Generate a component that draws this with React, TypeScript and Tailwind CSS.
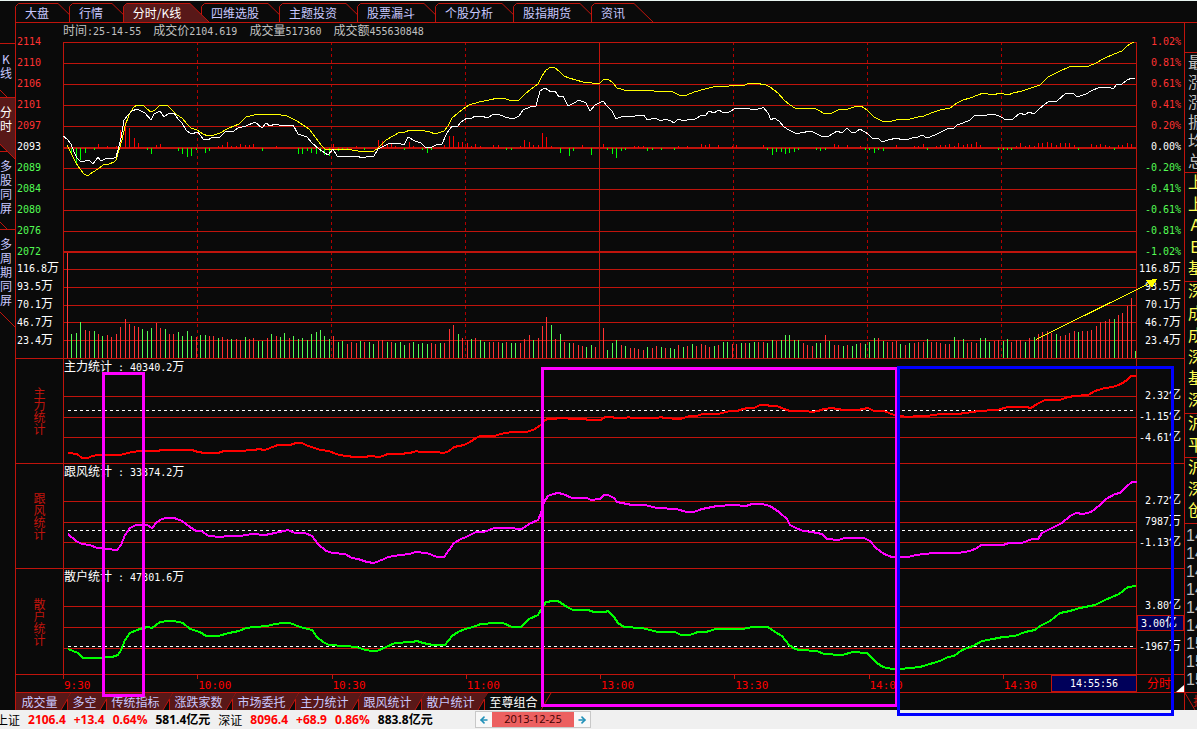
import { Fragment, ReactNode } from "react";
import { ArrowLeft, ArrowRight } from "lucide-react";

const RED = "#c0140c";

const topTabs = [
  { name: "大盘", w: 54 },
  { name: "行情", w: 54 },
  { name: "分时/K线", w: 78 },
  { name: "四维选股", w: 78 },
  { name: "主题投资", w: 78 },
  { name: "股票漏斗", w: 78 },
  { name: "个股分析", w: 78 },
  { name: "股指期货", w: 78 },
  { name: "资讯", w: 54 },
];

const bottomTabs = [
  { name: "成交量", w: 51 },
  { name: "多空", w: 39 },
  { name: "传统指标", w: 63 },
  { name: "涨跌家数", w: 63 },
  { name: "市场委托", w: 63 },
  { name: "主力统计", w: 63 },
  { name: "跟风统计", w: 63 },
  { name: "散户统计", w: 63 },
  { name: "至尊组合", w: 63 },
];

const prices = ["2114", "2110", "2106", "2101", "2097", "2093", "2089", "2084", "2080", "2076", "2072"];
const percents = ["1.02%", "0.81%", "0.61%", "0.41%", "0.20%", "0.00%", "-0.20%", "-0.41%", "-0.61%", "-0.81%", "-1.02%"];
const volumes = ["116.8万", "93.5万", "70.1万", "46.7万", "23.4万"];
const times = ["9:30", "10:00", "10:30", "11:00", "13:00", "13:30", "14:00", "14:30"];

const avgLine =
  "67,145 71,153 76,163 80,169 84,174 86,175 89,175 93,172 98,169 103,165 109,164 114,162 116,160 119,150 122,140 125,126 129,115 133,108 137,105 143,105 147,109 151,112 155,110 159,106 161,105 167,105 171,109 177,115 182,118 187,124 191,128 197,130 203,134 208,136 214,135 220,133 229,128 239,124 246,117 254,115 266,114 275,114 287,116 297,121 309,129 316,138 321,145 326,150 332,149 346,149 358,151 372,152 377,149 386,140 393,136 400,132 405,132 410,130 420,130 430,132 435,134 444,131 448,126 452,118 458,113 463,109 469,105 479,102 489,100 498,98 506,99 512,101 519,100 524,95 531,89 538,84 542,76 546,70 551,67 554,67 560,72 564,76 569,78 576,80 583,82 592,83 600,83 604,79 608,79 613,83 617,88 628,91 638,90 649,90 659,92 671,91 679,95 687,95 694,92 705,89 717,86 729,86 738,85 745,85 749,83 755,83 766,85 770,87 778,93 784,100 790,105 795,108 800,108 814,108 818,110 825,114 832,113 838,110 848,109 857,106 861,106 867,110 874,117 880,120 884,122 892,121 900,119 910,119 918,117 924,116 931,113 940,110 950,108 957,103 963,100 970,98 978,95 983,93 993,95 1000,93 1008,95 1013,93 1022,91 1031,88 1040,85 1048,77 1058,72 1069,67 1080,66 1089,66 1096,63 1105,58 1114,54 1122,51 1127,46 1135,41";

const priceLine =
  "63,136 67,139 71,144 74,152 77,158 81,162 89,160 93,164 98,157 101,161 105,159 114,158 116,157 118,150 121,138 124,120 128,115 132,111 137,109 145,113 151,120 154,114 160,111 164,117 169,113 174,113 178,119 182,123 186,130 191,134 198,132 203,139 208,140 213,137 220,137 226,131 234,131 238,128 246,126 255,122 262,128 266,123 270,126 275,124 283,126 293,125 298,134 307,137 312,143 319,149 328,155 333,149 337,156 355,156 364,158 368,156 374,156 378,149 384,146 390,143 398,143 404,145 408,137 415,141 421,143 426,148 432,147 436,145 442,144 447,133 452,126 457,127 461,122 467,118 471,119 475,116 481,116 488,118 492,115 498,114 505,117 513,119 519,116 523,110 530,107 536,106 540,91 543,89 545,88 551,92 555,91 559,97 563,96 568,106 574,103 579,100 586,103 590,111 595,105 603,101 607,106 612,111 616,119 623,116 632,117 638,115 644,115 647,120 655,118 661,121 665,119 671,121 674,123 678,119 684,121 690,119 695,119 702,115 706,115 709,111 714,113 719,110 722,112 729,112 736,108 741,109 746,108 754,110 762,108 763,107 768,113 771,120 774,118 779,121 784,127 789,130 795,133 800,133 811,131 821,136 829,136 837,131 842,133 847,128 852,133 856,132 860,129 868,134 873,139 878,138 882,142 888,140 897,138 902,140 909,139 915,137 918,137 922,135 927,138 935,135 949,128 953,129 957,125 963,123 970,120 975,115 987,115 994,114 1001,117 1006,120 1013,119 1020,113 1025,115 1029,112 1034,114 1039,109 1045,104 1048,102 1057,101 1065,94 1069,93 1073,93 1077,97 1086,94 1091,91 1100,87 1109,87 1113,89 1117,84 1122,84 1127,80 1132,78 1135,79";

const mainLine =
  "68,453 77,454 82,458 88,458 92,456 98,455 120,455 132,452 140,451 158,451 161,450 192,450 198,452 205,453 218,453 224,451 238,451 255,450 258,449 265,450 275,446 278,445 290,445 296,443 302,443 308,446 315,448 320,450 329,451 336,454 345,456 356,457 366,457 369,456 380,457 388,454 400,454 409,453 414,452 416,451 420,452 436,452 444,453 449,451 454,447 464,445 470,442 476,438 480,436 495,436 500,434 512,432 526,432 533,430 538,427 542,424 545,420 548,419 555,419 558,418 566,418 570,419 585,419 588,420 601,420 605,417 612,417 615,418 626,418 628,417 632,418 657,418 661,417 664,418 680,419 690,416 697,416 702,414 718,414 726,412 730,411 737,411 743,409 748,408 754,408 760,405 767,405 770,406 777,406 784,409 790,411 806,411 812,412 818,411 824,409 833,408 836,409 845,410 858,410 868,408 874,411 884,411 894,415 900,416 908,417 918,416 927,416 933,415 941,414 958,414 965,413 973,412 978,411 997,410 1008,407 1026,407 1031,408 1037,404 1045,400 1060,400 1068,397 1075,396 1088,395 1095,391 1105,388 1113,387 1121,384 1127,380 1131,376 1136,376";

const followLine =
  "68,534 76,541 82,544 90,545 97,548 107,549 117,550 121,545 125,535 130,528 136,525 147,525 152,528 157,522 162,519 166,518 174,518 182,521 190,527 196,531 201,531 209,536 220,537 229,536 240,536 252,534 265,535 275,533 288,530 295,533 305,533 312,536 318,544 326,551 333,553 345,554 352,558 358,559 367,562 374,563 384,559 388,557 400,555 410,554 415,552 427,553 437,557 444,557 449,550 454,543 461,539 466,537 476,532 484,532 494,528 508,528 522,529 529,524 538,520 541,513 544,502 548,496 553,494 558,493 563,494 572,498 587,498 591,500 600,499 604,495 608,495 614,498 617,502 632,505 645,505 657,508 676,509 687,512 694,512 702,509 717,506 733,505 746,506 752,504 762,504 770,506 779,512 787,519 790,525 796,528 803,531 812,532 822,534 827,539 838,540 845,538 864,538 870,541 876,548 884,554 892,557 908,557 916,555 934,553 958,553 970,551 977,548 981,545 1003,545 1009,543 1022,543 1032,539 1038,539 1042,533 1052,528 1062,523 1070,516 1076,513 1083,514 1091,512 1100,505 1106,499 1115,494 1120,493 1127,486 1132,482 1137,482";

const retailLine =
  "68,649 78,653 83,658 103,658 106,657 112,657 118,655 121,650 125,640 130,633 137,630 143,628 148,627 152,628 160,622 168,621 174,621 183,623 190,629 200,632 206,636 218,636 229,633 239,631 246,628 255,627 267,626 275,624 283,623 290,623 300,627 312,630 317,637 323,642 329,645 345,646 357,647 362,649 371,651 377,651 386,647 395,643 412,642 417,641 423,643 433,645 445,645 452,636 458,632 465,629 473,627 481,624 495,623 503,623 512,627 521,627 529,619 538,615 542,608 546,602 553,601 558,601 567,607 573,610 588,610 594,612 605,612 608,611 614,617 618,623 624,627 642,628 650,630 658,632 675,632 681,635 690,635 698,632 706,632 716,629 743,629 752,627 768,627 775,632 782,636 789,645 795,649 800,650 817,651 824,654 842,655 853,652 867,653 872,658 877,663 883,667 892,669 900,669 920,667 930,664 940,661 948,657 954,656 962,650 973,646 982,641 993,639 1003,637 1015,636 1025,632 1035,630 1040,626 1050,621 1060,613 1070,611 1080,608 1095,605 1105,600 1119,594 1128,587 1136,586";

// one entry per minute pair: colour letter + bar height
const morningVol =
  "r105 g24 g25 g36 r28 r27 g27 r24 g22 r23 r21 r24 r31 r39 r34 r32 r31 g29 g27 g30 r35 r30 g29 r24 r24 g26 g22 g27 g22 r21 g23 g23 r22 r22 g20 r21 r19 g19 r19 r18 g21 r19 r20 g17 g17 r20 g24 r22 g21 g25 r20 g22 g19 g20 g18 g24 g26 g28 g22 g19 r22 g16 g17 r14 r16 r15 g17 r16 g16 g14 r17 r18 g16 r16 g15 g16 g13 r15 g16 g14 g15 g14 r15 r14 g15 r15 r29 r33 g24 r20 r18 g19 r20 g18 g16 r16 r16 r16 g15 r16 g15 g15 r15 r19 r23 g18 r20 r32 r41 g33 r19 g24 r16 g15 r15 r13 r12 g11 g13 r11";
const afternoonVol =
  "r30 g8 g15 g18 r13 g12 r10 r10 r9 r8 g11 r10 r12 g11 r10 g10 g9 r13 g11 r12 g14 r12 r14 r13 r11 g12 r13 g16 g16 r14 r14 g15 r15 g15 g16 r16 r16 g15 g18 r17 g18 g23 g23 g18 g18 r15 r13 r12 g15 g15 r23 g17 r13 r13 g12 r13 g12 g14 r15 g14 g16 g20 r20 g17 r16 r16 r17 g14 r13 g15 r15 r16 r16 g19 r16 r16 r15 r14 r14 g21 r18 g19 r15 r16 r15 g20 g20 g16 r17 r18 g17 g19 r16 r18 r18 g16 r20 g21 r24 r26 r27 r25 g24 r22 r23 r25 r27 g26 r27 r27 r28 r32 r36 r37 r39 g39 r43 r45 r52 r60";

// [bar index, height], negative goes below the zero line
const morningFlow = [
  [1, -6], [2, -15], [3, -11], [4, -4], [6, -1], [7, 3], [9, 1], [11, 1], [12, 17], [13, 25], [14, 19], [15, 9], [16, 4],
  [18, -1], [19, -5], [20, 2], [21, 3], [25, -2], [26, -5], [27, -8], [28, -7], [29, -1], [31, -4], [32, -2], [34, 1],
  [35, 2], [36, 5], [37, 1], [38, 1], [39, 3], [40, 2], [41, 2], [42, 3], [44, -2], [47, 1], [52, -5], [53, -5], [54, -2],
  [55, -4], [56, -5], [57, -3], [58, -6], [59, -7], [60, 3], [61, -2], [62, -1], [63, -1], [65, 1], [67, -1], [70, 7],
  [71, 6], [72, 2], [73, 3], [74, 1], [76, -1], [77, 5], [78, 1], [80, -1], [81, -4], [82, -1], [85, 2], [86, 11], [87, 11],
  [88, 5], [89, 5], [90, 4], [91, 1], [92, 3], [93, 1], [96, 2], [97, 2], [99, -1], [100, -1], [102, 1], [103, 7],
  [104, 5], [105, 2], [106, 2], [107, 14], [108, 10], [109, 1], [111, -4], [113, -7], [114, -2], [116, 2], [118, -6],
];
const afternoonFlow = [
  [0, 3], [1, -1], [2, -5], [3, -9], [4, -2], [5, -1], [7, 1], [8, 1], [9, 1], [10, -2], [11, -1], [13, -1], [16, -1],
  [17, 1], [19, 1], [22, 3], [23, 2], [24, 3], [26, 2], [29, 1], [30, 2], [36, 2], [37, -1], [38, -6], [39, -3], [40, -3],
  [41, -5], [42, -4], [43, -3], [44, -1], [48, -1], [49, -2], [50, -1], [52, 3], [53, 2], [55, 2], [58, 1], [59, -1],
  [60, -1], [61, -4], [62, -1], [63, -2], [66, 2], [70, 1], [71, 1], [72, 3], [73, -1], [75, 1], [76, 2], [77, 2], [78, 3],
  [79, 1], [80, 4], [81, 2], [82, 3], [83, 3], [84, 5], [85, 2], [89, -1], [90, -1], [91, -1], [92, -1], [93, 1], [94, 4],
  [95, 1], [96, 2], [97, 1], [98, 4], [99, 4], [100, 5], [101, 4], [102, 2], [103, 4], [104, 4], [105, 4], [106, 2],
  [107, -1], [110, 3], [111, 2], [112, 3], [113, 2], [114, 1], [115, -1], [116, 2], [117, 2], [118, 4], [119, 3],
];

const barX = (start: number, i: number) => Math.floor(start + i * 4.44);

// digits in the mono face, Chinese characters a size larger
const Mix = ({ children }: { children: string }) => (
  <>
    {children.split(/([\u4e00-\u9fff]+)/).map((part, i) =>
      /[\u4e00-\u9fff]/.test(part) ? (
        <Fragment key={i}>{part}</Fragment>
      ) : (
        <span key={i} className="whitespace-pre font-['DejaVu_Sans_Mono',monospace] text-[10px]">{part}</span>
      )
    )}
  </>
);

const Plot = ({ y, h, children }: { y: number; h: number; children: ReactNode }) => (
  <svg
    className="absolute inset-0 h-full w-full"
    viewBox={`63 ${y} 1074 ${h}`}
    preserveAspectRatio="none"
    shapeRendering="crispEdges"
    fill="none"
  >
    {children}
  </svg>
);

const Curve = ({ points, color, w = 1 }: { points: string; color: string; w?: number }) => (
  <polyline points={points} stroke={color} strokeWidth={w} vectorEffect="non-scaling-stroke" />
);

const VolumeBars = ({ data, start }: { data: string; start: number }) => (
  <>
    {data.split(" ").map((bar, i) => {
      const h = Number(bar.slice(1));
      return (
        <rect key={i} x={barX(start, i)} y={358 - h} width="1" height={h} fill={bar[0] === "r" ? "#ff3232" : "#54fc54"} />
      );
    })}
  </>
);

const FlowBars = ({ data, start }: { data: number[][]; start: number }) => (
  <>
    {data.map(([i, h]) => (
      <rect
        key={i}
        x={barX(start, i)}
        y={h > 0 ? 147 - h : 148}
        width="1"
        height={Math.abs(h) + 1}
        fill={h > 0 ? "#ff0000" : "#00ff00"}
      />
    ))}
  </>
);

const PriceChart = () => (
  <Plot y={42} h={316}>
    {[197, 331, 465, 733, 867, 1001].map((x) => (
      <path key={x} d={`M${x}.5 42V358`} stroke="#b40000" strokeDasharray="3 3" />
    ))}
    <path d="M599.5 42V358" stroke={RED} />
    {[42, 63, 84, 105, 126, 168, 189, 210, 231, 269, 287, 305, 322, 340].map((y) => (
      <path key={y} d={`M63 ${y}.5H1137`} stroke={RED} />
    ))}
    <path d="M63 148H1137M63 252H1137" stroke={RED} strokeWidth="2" />
    <path d="M63.5 42V358M1136.5 42V358" stroke={RED} />
    <FlowBars data={morningFlow} start={67.4} />
    <FlowBars data={afternoonFlow} start={603.4} />
    <VolumeBars data={morningVol} start={67.4} />
    <VolumeBars data={afternoonVol} start={603.4} />
    <rect x="1135" y="351" width="1" height="7" fill="#54fc54" />
    <Curve points={avgLine} color="#ffff00" />
    <Curve points={priceLine} color="#ffffff" />
  </Plot>
);

type PanelProps = {
  name: string;
  value: string;
  y: number;
  lines: number[];
  zero: number;
  points: string;
  color: string;
  labels: string[];
  cls: string;
  current?: boolean;
};

const Panel = ({ name, value, y, lines, zero, points, color, labels, cls, current }: PanelProps) => (
  <section className={`flex border-b border-[#c0140c] ${cls}`}>
    <div className="flex w-[47px] shrink-0 items-center justify-center">
      <h2 className="w-3 text-center leading-3 break-all text-[#c0140c]">{name}</h2>
    </div>
    <div className="relative flex-1">
      <Plot y={y} h={current ? 105 : 104}>
        {lines.map((l) => (
          <path key={l} d={`M63 ${l}.5H1137`} stroke={RED} />
        ))}
        <path d={`M63.5 ${y}v106M1136.5 ${y}v106`} stroke={RED} />
        <path d={`M68 ${zero}.5H1134`} stroke="#fff" strokeDasharray="3 3" />
        <Curve points={points} color={color} w={2} />
      </Plot>
      <p className="relative pl-px leading-[14px]">
        <Mix>{`${name} : ${value}`}</Mix>
      </p>
    </div>
    <div className="w-[47px] shrink-0 pt-6 text-right whitespace-nowrap">
      {labels.map((l, i) =>
        current && i === 1 ? (
          <div key={l} className="h-4 border border-[#c0140c] bg-[#00005a] pr-1.5 leading-3"><Mix>{l}</Mix></div>
        ) : (
          <div key={l} className={current ? (i ? "h-7 pr-[3px] leading-7" : "h-[22px] pr-[3px] leading-[22px]") : "h-[21px] pr-[3px] leading-[21px]"}>
            <Mix>{l}</Mix>
          </div>
        )
      )}
    </div>
  </section>
);

const labelColor = (i: number) => (i < 5 ? "text-[#ff3232]" : i === 5 ? "text-white" : "text-[#54fc54]");

const Axis = ({ rows, side }: { rows: string[]; side: string }) => (
  <div className={`w-[47px] shrink-0 pt-[9px] whitespace-nowrap ${side}`}>
    <ul className="flex flex-col gap-[5px]">
      {rows.map((r, i) => (
        <li key={r} className={`h-4 leading-4 ${labelColor(i)}`}><Mix>{r}</Mix></li>
      ))}
    </ul>
    <ul>
      {volumes.map((v) => (
        <li key={v} className="h-[18px] leading-[18px]"><Mix>{v}</Mix></li>
      ))}
    </ul>
  </div>
);

const TopTabs = () => (
  <nav className="ml-[15px] flex h-[22px] items-end border-b border-[#c0140c]">
    {topTabs.map(({ name, w }, i) => {
      const on = i === 2;
      return (
        <button key={name} className={`relative h-[19px] shrink-0 ${on ? "z-10 text-white" : "text-[#c8c8ff]"}`} style={{ width: w }}>
          <svg className="absolute top-0 left-0 overflow-visible" width={w} height="19">
            <path
              d={`M0.5 19V3.5L3.5 0.5H${w - 11}L${w + 8} 19`}
              fill={on ? "#581818" : "#0a0a0a"}
              stroke={RED}
            />
          </svg>
          <span className="relative block pr-2.5 text-center leading-[18px] whitespace-nowrap">{name}</span>
        </button>
      );
    })}
  </nav>
);

const BottomTabs = () => (
  <nav className="flex h-[17px]">
    {bottomTabs.map(({ name, w }, i) => {
      const on = i === 8;
      return (
        <button key={name} className={`relative h-[17px] shrink-0 ${on ? "text-white" : "text-[#c8c8ff]"}`} style={{ width: w }}>
          <svg className="absolute top-0 left-0 overflow-visible" width={w} height="17">
            <path
              d={i ? `M0 17V6L4 0H${w + 4}L${w - 6} 17Z` : `M0 17V0H${w + 4}L${w - 6} 17Z`}
              fill={on ? "#0a0a0a" : "#581818"}
            />
            {i > 0 && <path d="M0.5 6V17" stroke={RED} />}
            <path d={`M${w + 4} 0L${w - 6} 17`} stroke={RED} />
          </svg>
          <span className="relative block pr-1 text-center leading-4 whitespace-nowrap">{name}</span>
        </button>
      );
    })}
  </nav>
);

const SideRail = () => (
  <nav className="relative flex w-[15px] shrink-0 flex-col text-[#c8c8ff]">
    <svg className="absolute top-0 left-0" width="15" height="687" viewBox="0 23 15 687" fill="none" stroke={RED}>
      <path d="M0 97.5H15V159L0 145Z" fill="#581818" stroke="none" />
      <path d="M0 43.5H15M0 90L7 97M0 97.5H15M0 144L15 159M0 151.5H7M0 222L7 229M0 229.5H15M0 312L15 327" />
    </svg>
    <button className="relative mt-[29px] w-3 text-center leading-[14px]">K<br />线</button>
    <button className="relative mt-[25px] w-3 leading-[14px] text-white">分<br />时</button>
    <button className="relative mt-[26px] w-3 leading-[14px]">多<br />股<br />同<br />屏</button>
    <button className="relative mt-[22px] w-3 leading-[14px]">多<br />周<br />期<br />同<br />屏</button>
  </nav>
);

const Block = ({ rows, cls }: { rows: string[]; cls: string }) => (
  <ul className={`grid auto-rows-fr border-b border-[#c0140c] pl-[3px] leading-4 ${cls}`}>
    {rows.map((r, i) => (
      <li key={i}>{r}</li>
    ))}
  </ul>
);

const QuotePanel = () => (
  <aside className="w-[13px] shrink-0 overflow-hidden border-l border-[#c0140c] text-base whitespace-nowrap text-[#ffff54]">
    <div className="h-[30px] border-b border-[#c0140c]" />
    <Block cls="h-[120px] text-[#c0c0c0]" rows={["最新", "涨跌", "涨幅", "振幅", "均价", "总量"]} />
    <Block cls="h-[109px]" rows={["上证", "上证", "Ａ股", "Ｂ股", "基金"]} />
    <Block cls="h-[132px]" rows={["深证", "成指", "成份", "深Ａ", "基金", "深综"]} />
    <Block cls="h-[44px]" rows={["沪深", "平均"]} />
    <Block cls="h-[66px]" rows={["沪市", "深市", "创业"]} />
    <ul className="h-[168px] pt-[3px] text-[#c0c0c0]">
      {["14", "14", "14", "14", "14", "14", "15", "15", "15"].map((t, i) => (
        <li key={i} className="h-[18px] pl-px font-['Liberation_Sans',sans-serif] leading-[18px]">{t}</li>
      ))}
    </ul>
    <div className="relative h-[18px] border-t border-[#c0140c] text-[#c0140c]">
      <svg className="absolute top-0 left-0" width="12" height="17">
        <path d="M0 0L10 17" stroke={RED} />
      </svg>
      <span className="block pl-2 text-xs leading-4">报价</span>
    </div>
  </aside>
);

// hand-drawn marks on top of the charts
const Marks = () => (
  <div className="pointer-events-none absolute inset-x-[47px] top-0 z-10 h-[670px]">
    <svg
      className="h-full w-full overflow-visible"
      viewBox="63 23 1074 670"
      preserveAspectRatio="none"
      shapeRendering="crispEdges"
      fill="none"
      strokeWidth="3"
    >
      <rect x="103.5" y="373.5" width="40" height="322" stroke="#ff00ff" />
      <rect x="542.5" y="368.5" width="354" height="337" stroke="#ff00ff" />
      <rect x="898.5" y="367.5" width="274" height="347" stroke="#0000ff" />
      <path d="M1036 339.5L1150 283" stroke="#ffff00" strokeWidth="1" />
      <path d="M1157 279L1146 280L1152 288Z" fill="#ffff00" />
    </svg>
  </div>
);

const Quote = ({ name, values, amount }: { name: string; values: string[]; amount: string }) => (
  <>
    <span>{name}</span>
    {values.map((v) => (
      <span key={v} className="font-['Open_Sans',sans-serif] font-bold text-[#ff0000]">{v}</span>
    ))}
    <span className="font-['Open_Sans','Noto_Sans_CJK_SC',sans-serif] font-bold">{amount}</span>
  </>
);

const StatusBar = () => (
  <footer className="flex h-[19px] items-center bg-[#f0f0f0] text-black">
    <div className="-ml-1 flex w-[479px] shrink-0 items-center gap-2 leading-[18px] whitespace-nowrap">
      <Quote name="上证" values={["2106.4", "+13.4", "0.64%"]} amount="581.4亿元" />
      <Quote name="深证" values={["8096.4", "+68.9", "0.86%"]} amount="883.8亿元" />
    </div>
    <div className="flex h-[17px] w-[116px] border border-[#c8c8c8] bg-white">
      <button aria-label="前一日" className="flex w-4 items-center justify-center bg-[#f8f8f8] text-[#2090b8]">
        <ArrowLeft size={10} strokeWidth={4} />
      </button>
      <input
        aria-label="日期"
        defaultValue="2013-12-25"
        className="w-0 flex-1 bg-[#ec6060] text-center font-['Open_Sans',sans-serif] text-[11px] text-[#400000]"
      />
      <button aria-label="后一日" className="flex w-4 items-center justify-center bg-[#f8f8f8] text-[#2090b8]">
        <ArrowRight size={10} strokeWidth={4} />
      </button>
    </div>
  </footer>
);

const App = () => {
  return (
    <div className="min-h-screen overflow-hidden border-t border-[#e8f4f0] bg-[#0a0a0a] font-['Noto_Sans_CJK_SC',sans-serif] text-xs text-white">
      <TopTabs />
      <div className="flex">
        <SideRail />
        <main className="relative flex min-w-0 flex-1 flex-col border-l border-[#c0140c]">
          <section className="flex h-[336px] border-b border-[#c0140c]">
            <Axis rows={prices} side="pl-px" />
            <div className="flex flex-1 flex-col">
              <p className="flex h-[19px] gap-3 leading-[14px] text-[#c0c0c0]">
                <span><Mix>时间:25-14-55</Mix></span>
                <span><Mix>成交价2104.619</Mix></span>
                <span><Mix>成交量517360</Mix></span>
                <span><Mix>成交额455630848</Mix></span>
              </p>
              <div className="relative flex-1">
                <PriceChart />
              </div>
            </div>
            <Axis rows={percents} side="pr-[3px] text-right" />
          </section>

          <Panel
            name="主力统计" value="40340.2万" y={359} lines={[396, 417, 437]} zero={410}
            points={mainLine} color="#ff0000" labels={["2.32亿", "-1.15亿", "-4.61亿"]} cls="h-[105px]"
          />
          <Panel
            name="跟风统计" value="33874.2万" y={464} lines={[501, 522, 542]} zero={530}
            points={followLine} color="#ff00ff" labels={["2.72亿", "7987万", "-1.13亿"]} cls="h-[105px]"
          />
          <Panel
            name="散户统计" value="47801.6万" y={569} lines={[606, 627, 648]} zero={646}
            points={retailLine} color="#00ff00" labels={["3.80亿", "3.00亿", "-1967万"]} cls="h-[106px]" current
          />

          <div className="flex h-[18px] border-b border-[#c0140c]">
            <div className="w-[47px] shrink-0" />
            <div className="grid flex-1 grid-cols-8 grid-rows-[17px] font-['DejaVu_Sans_Mono',monospace] text-[#ff0000]">
              {times.map((t, i) => (
                <div key={t} className="flex justify-between">
                  <span className="h-1 w-px bg-[#c0140c]" />
                  <time className="flex-1 text-[11px] leading-[22px]">{t}</time>
                  {i === 7 && (
                    <span className="w-[86px] border border-[#c0140c] bg-[#00005a] text-center text-[10px] leading-[15px] text-white">14:55:56</span>
                  )}
                </div>
              ))}
            </div>
            <div className="flex w-[47px] shrink-0 items-end justify-between pl-[10px] text-[#ff0000]">
              <button className="leading-[18px]">分时</button>
              <svg width="8" height="7"><path d="M8 0V7H0Z" fill="#fff" /></svg>
            </div>
          </div>
          <BottomTabs />
          <Marks />
        </main>
        <QuotePanel />
      </div>
      <StatusBar />
    </div>
  );
};

export default App;
